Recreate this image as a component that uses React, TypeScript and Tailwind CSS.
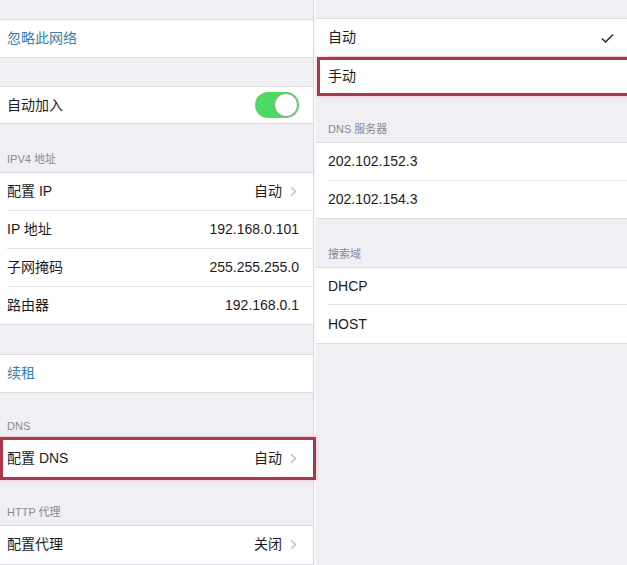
import React from "react";

const font = { fontFamily: '"Liberation Sans", "Noto Sans CJK SC", sans-serif' };

const Chevron = () => (
  <svg width="7" height="11" viewBox="0 0 7 11" className="shrink-0">
    <polyline points="1,1 5.5,5.5 1,10" fill="none" stroke="#c4c4c9" strokeWidth="1.6" />
  </svg>
);

const Check = () => (
  <svg width="13" height="10" viewBox="0 0 13 10">
    <polyline points="1,5.5 4.5,9 12,1.5" fill="none" stroke="#2b2b2b" strokeWidth="1.5" />
  </svg>
);

const Toggle = () => (
  <div className="flex h-[26px] w-[44px] items-center justify-end rounded-full bg-[#4cd964] pr-[1px]">
    <div className="h-[24px] w-[24px] rounded-full border border-[#9a9a9a] bg-white" />
  </div>
);

const Header = ({ text, h, pl }: { text: string; h: string; pl: string }) => (
  <div className={`flex items-end ${h} ${pl} pb-[6px] text-[11px] leading-[14px] text-[#8a8a8f]`}>{text}</div>
);

type RowProps = {
  label: string;
  value?: string;
  chevron?: boolean;
  sep?: boolean;
  h?: string;
  blue?: boolean;
  right?: React.ReactNode;
  pl?: string;
  pr?: string;
  overlay?: React.ReactNode;
};

const Row = ({ label, value, chevron, sep, h = "h-[38px]", blue, right, pl = "pl-[7px]", pr = "pr-[14px]", overlay }: RowProps) => (
  <div className={`relative flex ${h} bg-white ${pl}`}>
    <div className={`flex flex-1 items-center ${pr} ${sep ? "border-b border-[#e3e3e7]" : ""}`}>
      <span className={`flex-1 text-[14px] ${blue ? "text-[#3a7eae]" : "text-[#1c1c1e]"}`}>{label}</span>
      {value && <span className="text-[14px] text-[#1c1c1e]">{value}</span>}
      {chevron && <span className="ml-[8px] flex"><Chevron /></span>}
      {right}
    </div>
    {overlay}
  </div>
);

const Group = ({ children }: { children: React.ReactNode }) => (
  <div className="border-y border-[#dcdce0]">{children}</div>
);

const RedBox = ({ cls }: { cls: string }) => (
  <div className={`pointer-events-none absolute z-10 border-[3px] border-[#a63a4c] shadow-[0_0_3px_#f2b3bd] ${cls}`} />
);

export default function App() {
  return (
    <div className="flex h-[565px] w-[627px] overflow-hidden bg-[#efeff4]" style={font}>
      {/* left panel */}
      <div className="flex w-[313px] shrink-0 flex-col">
        <div className="h-[19px]" />
        <Group>
          <Row label="忽略此网络" blue h="h-[37px]" />
        </Group>
        <div className="h-[29px]" />
        <Group>
          <Row label="自动加入" h="h-[36px]" right={<Toggle />} />
        </Group>
        <Header text="IPV4 地址" h="h-[48px]" pl="pl-[7px]" />
        <Group>
          <Row label="配置 IP" value="自动" chevron pr="pr-[16px]" sep />
          <Row label="IP 地址" value="192.168.0.101" sep />
          <Row label="子网掩码" value="255.255.255.0" sep />
          <Row label="路由器" value="192.168.0.1" h="h-[37px]" />
        </Group>
        <div className="h-[30px]" />
        <Group>
          <Row label="续租" blue h="h-[37px]" />
        </Group>
        <Header text="DNS" h="h-[46px]" pl="pl-[7px]" />
        <Group>
          <Row
            label="配置 DNS"
            value="自动"
            chevron
            pr="pr-[16px]"
            h="h-[37px]"
            overlay={<RedBox cls="-top-[3px] -bottom-[3px] left-0 -right-[3px]" />}
          />
        </Group>
        <Header text="HTTP 代理" h="h-[48px]" pl="pl-[7px]" />
        <Group>
          <Row label="配置代理" value="关闭" chevron pr="pr-[16px]" />
        </Group>
      </div>

      {/* divider */}
      <div className="w-[3px] shrink-0 border-l border-[#dadade] bg-[#f8f8fa]" />

      {/* right panel */}
      <div className="flex flex-1 flex-col">
        <div className="h-[18px]" />
        <Group>
          <Row label="自动" pl="pl-[12px]" pr="pr-[13px]" sep h="h-[38px]" right={<Check />} />
          <Row
            label="手动"
            pl="pl-[12px]"
            h="h-[38px]"
            overlay={<RedBox cls="top-0 -bottom-[1px] left-[1px] -right-[3px]" />}
          />
        </Group>
        <Header text="DNS 服务器" h="h-[46px]" pl="pl-[12px]" />
        <Group>
          <Row label="202.102.152.3" pl="pl-[12px]" sep h="h-[38px]" />
          <Row label="202.102.154.3" pl="pl-[12px]" h="h-[37px]" />
        </Group>
        <Header text="搜索域" h="h-[48px]" pl="pl-[12px]" />
        <Group>
          <Row label="DHCP" pl="pl-[12px]" sep h="h-[37px]" />
          <Row label="HOST" pl="pl-[12px]" h="h-[38px]" />
        </Group>
      </div>
    </div>
  );
}
